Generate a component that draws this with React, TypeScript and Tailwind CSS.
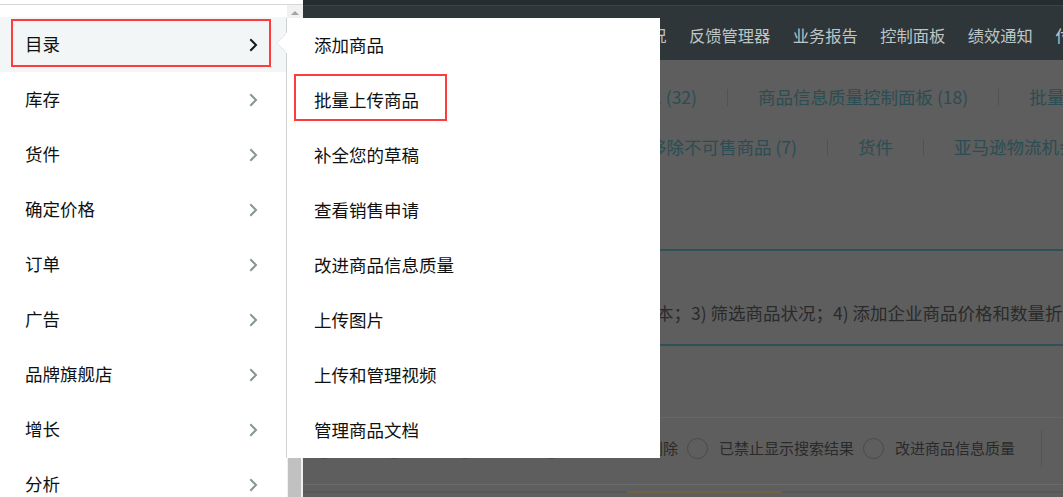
import React from 'react';

const leftItems = ['目录', '库存', '货件', '确定价格', '订单', '广告', '品牌旗舰店', '增长', '分析'];

const subItems = [
  '添加商品',
  '批量上传商品',
  '补全您的草稿',
  '查看销售申请',
  '改进商品信息质量',
  '上传图片',
  '上传和管理视频',
  '管理商品文档',
];

const navItems = ['库存规划', '账户状况', '反馈管理器', '业务报告', '控制面板', '绩效通知', '付款', '广告活动管理'];

const radios = ['全部', '在售', '不可售', '商品信息已删除', '已禁止显示搜索结果', '改进商品信息质量'];

// 右侧箭头
const Chevron = ({ active }: { active?: boolean }) => (
  <svg
    width="9"
    height="14"
    viewBox="0 0 9 14"
    fill="none"
    stroke="currentColor"
    strokeWidth={2}
    strokeLinecap="square"
    className={active ? 'text-[#16191f]' : 'text-[#879596]'}
  >
    <path d="M2 2 7 7 2 12" />
  </svg>
);

const Sep = () => <span className="mx-[30px] h-[17px] w-px shrink-0 bg-[#515353]" />;

export default function App() {
  return (
    <div className="relative flex h-[497px] w-[1063px] overflow-hidden font-['Noto_Sans_CJK_SC','Noto_Sans',sans-serif]">
      {/* 左侧抽屉菜单 */}
      <div className="flex w-[303px] shrink-0 flex-col bg-white">
        <div className="h-[5px] shrink-0 border-b border-[#d5d9d9]" />
        <div className="flex min-h-0 flex-1 overflow-hidden">
          <div className="w-[287px] shrink-0 pt-[12px]">
            {leftItems.map((label, i) => (
              <div
                key={label}
                className={`flex h-[55px] items-center justify-between pl-[25px] pr-[29px] text-[17.5px] text-[#0f1111] ${
                  i === 0 ? 'bg-[#f3f6f6]' : ''
                }`}
              >
                <span>{label}</span>
                <Chevron active={i === 0} />
              </div>
            ))}
          </div>
          {/* 滚动条 */}
          <div className="flex w-[16px] shrink-0 flex-col items-center bg-[#f1f1f1]">
            <div className="mt-[6px] h-0 w-0 border-x-[4px] border-b-[4px] border-x-transparent border-b-[#a3a3a3]" />
            <div className="mt-auto ml-[-1px] h-[40px] w-[13px] bg-[#c1c1c1]" />
          </div>
        </div>
      </div>

      {/* 背景页面（遮罩后） */}
      <div className="flex min-w-0 flex-1 flex-col overflow-hidden bg-[#5e5e5e] [&>*]:shrink-0">
        <div className="h-[5px] bg-[#262d30]" />
        <div className="h-px bg-[#3b4447]" />
        <div className="flex h-[54px] items-center gap-[22.5px] whitespace-nowrap bg-[#2e3639] pl-[211px] pt-[4px] text-[16.25px] text-[#bfc5c5]">
          {navItems.map((n) => (
            <span key={n} className="shrink-0">
              {n}
            </span>
          ))}
        </div>

        <div className="mt-[12px] flex h-[50px] items-center whitespace-nowrap text-[17.5px] text-[#2b4d53]">
          <span className="w-[394px] shrink-0 text-right">需要关注的商品信息 (32)</span>
          <Sep />
          <span className="shrink-0">商品信息质量控制面板 (18)</span>
          <Sep />
          <span className="shrink-0">批量上传商品</span>
        </div>
        <div className="flex h-[50px] items-center whitespace-nowrap text-[17.5px] text-[#2b4d53]">
          <span className="w-[494px] shrink-0 text-right">移除不可售商品 (7)</span>
          <Sep />
          <span className="shrink-0">货件</span>
          <Sep />
          <span className="shrink-0">亚马逊物流机会 (3)</span>
        </div>

        <div className="mt-[77px] flex h-[97px] flex-col border-y-2 border-[#2c5156] pt-[23px] text-[17.5px] text-[#2a2a2a]">
          <div className="h-[26px] pl-[28px] leading-[26px]">商品信息页面更新</div>
          <div className="flex h-[26px] items-center whitespace-nowrap">
            <span className="w-[388px] shrink-0 text-right">2) 更新价格和成本；</span>
            <span className="shrink-0">3) 筛选商品状况；4) 添加企业商品价格和数量折扣。</span>
          </div>
        </div>

        <div className="mt-[71px] h-px bg-[#666666]" />
        <div className="flex h-[60px] items-center whitespace-nowrap pl-[10px] text-[15px] text-[#2a2a2a]">
          <div className="flex items-center gap-[9px]">
            {radios.map((r) => (
              <label key={r} className="flex shrink-0 items-center gap-[11px]">
                <span className="h-[21px] w-[21px] rounded-full border border-[#4a4a4a]" />
                <span>{r}</span>
              </label>
            ))}
          </div>
          <span className="ml-[26px] h-[37px] w-px shrink-0 bg-[#545454]" />
        </div>
        <div className="mt-[6px] h-px bg-[#6a6a6a]" />
        <div className="mt-[6px] h-[2px] bg-[#585858]">
          <div className="ml-[324px] h-full w-[155px] bg-[#74603f]" />
        </div>
      </div>

      {/* 二级菜单 */}
      <div className="absolute left-[286px] top-[18px] flex h-[440px] w-[374px] flex-col border-l border-[#d0d3d3] bg-white">
        {subItems.map((s) => (
          <div key={s} className="flex h-[55px] shrink-0 items-center pl-[27px] text-[17.5px] text-[#0f1111]">
            {s}
          </div>
        ))}
      </div>
      <svg className="absolute left-[276px] top-[33px]" width="11" height="20" viewBox="0 0 11 20">
        <polygon points="11,0 0.5,10 11,20" fill="#ffffff" stroke="#e2e5e5" strokeWidth={1} />
        <rect x="10" y="0" width="2" height="20" fill="#ffffff" />
      </svg>

      {/* 红色标注框 */}
      <div className="absolute left-[11px] top-[19px] h-[48px] w-[260px] border-2 border-[#ff3b3b]" />
      <div className="absolute left-[294px] top-[74px] h-[47px] w-[153px] border-2 border-[#ff3b3b]" />
    </div>
  );
}
